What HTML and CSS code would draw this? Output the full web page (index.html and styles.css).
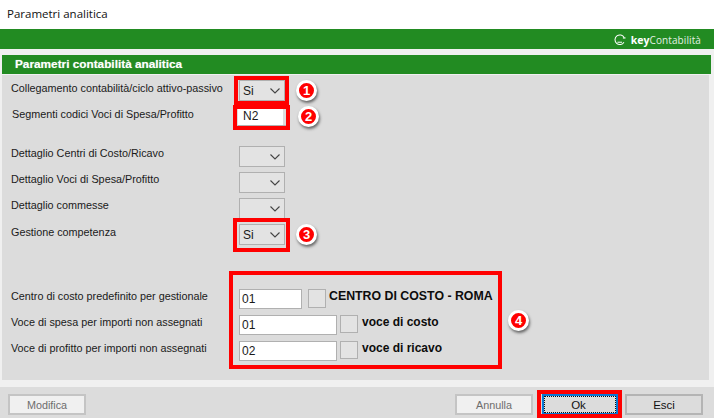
FILE: index.html
```html
<!DOCTYPE html>
<html lang="it">
<head>
<meta charset="utf-8">
<title>Parametri analitica</title>
<link rel="stylesheet" href="styles.css">
</head>
<body>
<div class="window">
  <div class="titlebar">Parametri analitica</div>
  <div class="brandbar">
    <svg class="brand-icon" viewBox="0 0 14 14" width="12" height="12"><path d="M11.6 9.5A5.6 5.6 0 1 1 11.8 4.2" fill="none" stroke="#fff" stroke-width="1.2"/><path d="M4 9.6h5.4" stroke="#fff" stroke-width="1.2"/><path d="M10.4 4.6h3" stroke="#fff" stroke-width="1.4"/></svg>
    <span class="brand-key">key</span><span class="brand-name">Contabilità</span>
  </div>
  <div class="content">
    <div class="section-title">Parametri contabilità analitica</div>
    <div class="form">
      <div class="row"><span class="label label-low">Collegamento contabilità/ciclo attivo-passivo</span>
        <div class="select"><span>Si</span><svg class="chev" viewBox="0 0 10 6" width="10" height="6"><path d="M.5 .5 5 5 9.5 .5" fill="none" stroke="#444" stroke-width="1.1"/></svg></div></div>
      <div class="row"><span class="label label-low label-shift">Segmenti codici Voci di Spesa/Profitto</span>
        <div class="code-input"><div class="input-white">N2</div><div class="input-tail"></div></div></div>
      <div class="row row-gap-a"><span class="label">Dettaglio Centri di Costo/Ricavo</span>
        <div class="select"><span></span><svg class="chev" viewBox="0 0 10 6" width="10" height="6"><path d="M.5 .5 5 5 9.5 .5" fill="none" stroke="#444" stroke-width="1.1"/></svg></div></div>
      <div class="row"><span class="label">Dettaglio Voci di Spesa/Profitto</span>
        <div class="select"><span></span><svg class="chev" viewBox="0 0 10 6" width="10" height="6"><path d="M.5 .5 5 5 9.5 .5" fill="none" stroke="#444" stroke-width="1.1"/></svg></div></div>
      <div class="row"><span class="label">Dettaglio commesse</span>
        <div class="select"><span></span><svg class="chev" viewBox="0 0 10 6" width="10" height="6"><path d="M.5 .5 5 5 9.5 .5" fill="none" stroke="#444" stroke-width="1.1"/></svg></div></div>
      <div class="row"><span class="label label-low">Gestione competenza</span>
        <div class="select"><span>Si</span><svg class="chev" viewBox="0 0 10 6" width="10" height="6"><path d="M.5 .5 5 5 9.5 .5" fill="none" stroke="#444" stroke-width="1.1"/></svg></div></div>
      <div class="row row-gap-b"><span class="label">Centro di costo predefinito per gestionale</span>
        <div class="field field-short">01</div><div class="lookup lookup-a"></div><b class="desc desc-large">CENTRO DI COSTO - ROMA</b></div>
      <div class="row"><span class="label">Voce di spesa per importi non assegnati</span>
        <div class="field field-long">01</div><div class="lookup"></div><b class="desc">voce di costo</b></div>
      <div class="row"><span class="label">Voce di profitto per importi non assegnati</span>
        <div class="field field-long">02</div><div class="lookup"></div><b class="desc">voce di ricavo</b></div>
    </div>
  </div>
  <div class="footer">
    <div class="btn btn-off">Modifica</div>
    <div class="footer-right">
      <div class="btn btn-off">Annulla</div>
      <div class="btn btn-ok"><span class="ok-focus">Ok</span></div>
      <div class="btn btn-plain">Esci</div>
    </div>
  </div>

  <div class="mark mark-1"></div>
  <div class="mark mark-2"></div>
  <div class="mark mark-3"></div>
  <div class="mark mark-4"></div>
  <div class="mark mark-5"></div>
  <div class="badge badge-1">1</div>
  <div class="badge badge-2">2</div>
  <div class="badge badge-3">3</div>
  <div class="badge badge-4">4</div>
</div>
</body>
</html>
```
FILE: styles.css
```css
* { box-sizing: border-box; }
html, body { margin: 0; padding: 0; }
body { background: #f0f0f0; font-family: "Liberation Sans", Arial, sans-serif; font-size: 10.8px; color: #1a1a1a; }
.window { position: relative; width: 714px; height: 418px; overflow: hidden; display: flex; flex-direction: column; background: #f0f0f0; }
.titlebar { height: 29px; background: #fff; padding: 6px 0 0 7px; font-family: "Open Sans", "Noto Sans", sans-serif; font-size: 11.5px; line-height: 16px; color: #111; }
.brandbar { height: 20px; background: #228b22; display: flex; align-items: center; justify-content: flex-end; padding: 2px 13px 0 0; color: #fff; font-family: "Open Sans", sans-serif; font-size: 10px; }
.brand-icon { margin-right: 3px; }
.brand-key { font-weight: 700; font-size: 10.5px; margin-left: 2px; }
.brand-name { color: #e4f0e4; font-size: 10px; letter-spacing: .1px; }
.content { margin: 6px 3px 0 2px; height: 325px; }
.section-title { height: 19px; background: #228b22; color: #fff; font-weight: 700; font-size: 11.8px; line-height: 19px; padding-left: 13px; text-shadow: 0 0 1px rgba(255,255,255,.5); }
.form { margin: 1px 2px 0 0; height: 305px; background: #dcdcdc; padding: 3px 0 0 9px; }
.row { height: 26px; display: flex; align-items: flex-start; }
.row-gap-a { margin-top: 14px; }
.row-gap-b { margin-top: 39px; }
.label { width: 228px; flex: none; line-height: 19px; white-space: nowrap; }
.label-low { line-height: 21px; }
.label-shift { padding-left: 1px; }
.select { margin-top: 2px; width: 46px; height: 21px; border: 1px solid #b0b0b0; background: #e3e3e3; display: flex; align-items: center; justify-content: space-between; padding: 1px 4px 0 3px; font-size: 12px; }
.chev { flex: none; }
.code-input { margin-top: 2px; margin-left: -2px; width: 50px; height: 20px; display: flex; border: 1px solid #b0b0b0; border-left-color: transparent; }
.input-white { width: 45px; background: #fff; padding-left: 5px; line-height: 19px; font-size: 12px; }
.input-tail { flex: 1; background: #dcdcdc; }
.field { margin-top: 2px; height: 20px; background: #fff; border: 1px solid #b0b0b0; padding-left: 2px; line-height: 18px; font-size: 12px; }
.field-short { width: 63px; margin-right: 6px; }
.field-long { width: 98px; margin-right: 3px; }
.lookup { margin-top: 2px; width: 18px; height: 18px; background: #e3e3e3; border: 1px solid #b0b0b0; flex: none; }
.lookup-a { height: 19px; }
.desc { margin-left: 4px; line-height: 18px; font-size: 12px; white-space: nowrap; color: #0c0c0c; }
.desc-large { margin-left: 3px; font-size: 12.35px; line-height: 18px; }
.footer { flex: 1; margin-top: 7px; background: #dcdcdc; display: flex; justify-content: space-between; padding: 7px 11px 3px 8px; }
.footer-right { display: flex; gap: 9px; }
.btn { width: 78px; height: 21px; display: flex; align-items: center; justify-content: center; font-size: 10.8px; }
.btn-off { background: #f0f0f0; border: 2px solid #c4c4c4; color: #6d6d6d; }
.btn-plain { background: #dcdcdc; border: 2px solid #b4b4b4; color: #111; font-size: 11.5px; }
.btn-ok { width: 76px; margin: 0 -2px 0 0; background: #dcdcdc; border: 2px solid #0a78d4; color: #111; font-size: 11.5px; }
.ok-focus { width: 100%; height: 100%; border: 1px dotted #111; padding-right: 3px; display: flex; align-items: center; justify-content: center; }
.mark { position: absolute; border: 4px solid #f00; }
.mark-1 { left: 234px; top: 76px; width: 55px; height: 29px; }
.mark-2 { left: 233px; top: 105px; width: 57px; height: 25px; }
.mark-3 { left: 233px; top: 218px; width: 57px; height: 34px; }
.mark-4 { left: 229px; top: 271px; width: 273px; height: 98px; }
.mark-5 { left: 537px; top: 390px; width: 85px; height: 28px; }
.badge { position: absolute; width: 21px; height: 21px; border-radius: 50%; background: #f00; border: 3px solid #fff; box-shadow: 1px 2px 3px rgba(0,0,0,.55); color: #fff; font-weight: 700; font-size: 13px; line-height: 15px; text-align: center; }
.badge-1 { left: 296px; top: 80px; }
.badge-2 { left: 298px; top: 106px; }
.badge-3 { left: 296px; top: 224px; }
.badge-4 { left: 508px; top: 310px; }
```
